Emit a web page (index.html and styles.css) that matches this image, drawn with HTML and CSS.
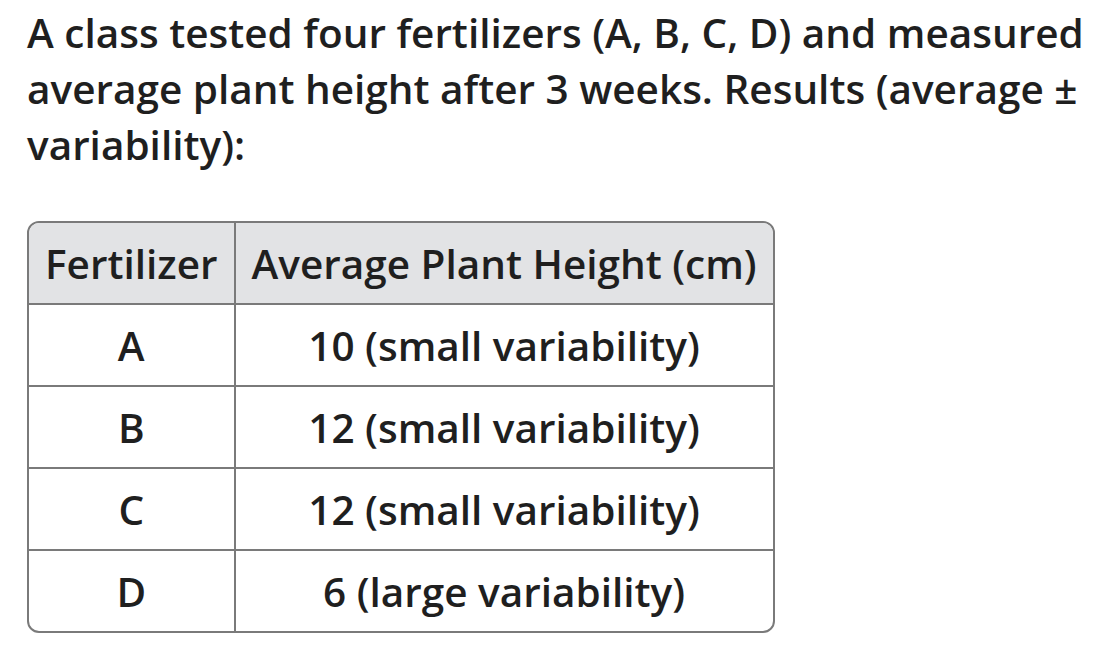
FILE: index.html
```html
<!DOCTYPE html>
<html lang="en">
<head>
<meta charset="utf-8">
<title>Fertilizer results</title>
<link rel="stylesheet" href="styles.css">
</head>
<body>
<main class="content">
  <p class="intro">A class tested four fertilizers (A, B, C, D) and measured average plant height after 3 weeks. Results (average ± variability):</p>
  <div class="table-wrap">
    <table class="results">
      <thead>
        <tr><th>Fertilizer</th><th>Average Plant Height (cm)</th></tr>
      </thead>
      <tbody>
        <tr><td>A</td><td>10 (small variability)</td></tr>
        <tr><td>B</td><td>12 (small variability)</td></tr>
        <tr><td>C</td><td>12 (small variability)</td></tr>
        <tr><td>D</td><td>6 (large variability)</td></tr>
      </tbody>
    </table>
  </div>
</main>
</body>
</html>
```
FILE: styles.css
```css
html, body {
  margin: 0;
  padding: 0;
  background: #ffffff;
}
body {
  font-family: "Open Sans", "Noto Sans", sans-serif;
  font-weight: 600;
  color: #1f1f1f;
}
.content {
  padding: 5px 0 0 27px;
  width: 1075px;
}
.intro {
  margin: 0;
  font-size: 40.5px;
  line-height: 56px;
}
.table-wrap {
  margin-top: 48px;
  display: inline-block;
  border: 2px solid #7a7a7a;
  border-radius: 12px;
  overflow: hidden;
}
.results {
  border-collapse: collapse;
  font-size: 40.5px;
}
.results th, .results td {
  border: 2px solid #7a7a7a;
  height: 80px;
  padding: 0 16px 0 15px;
  text-align: center;
  font-weight: 600;
}
.results th:first-child { padding-left: 16px; padding-right: 17px; }
.results th {
  background: #e2e3e5;
}
.results tr:first-child th { border-top: none; }
.results tbody tr:last-child td { border-bottom: none; }
.results th:first-child, .results td:first-child { border-left: none; }
.results th:last-child, .results td:last-child { border-right: none; }
```
